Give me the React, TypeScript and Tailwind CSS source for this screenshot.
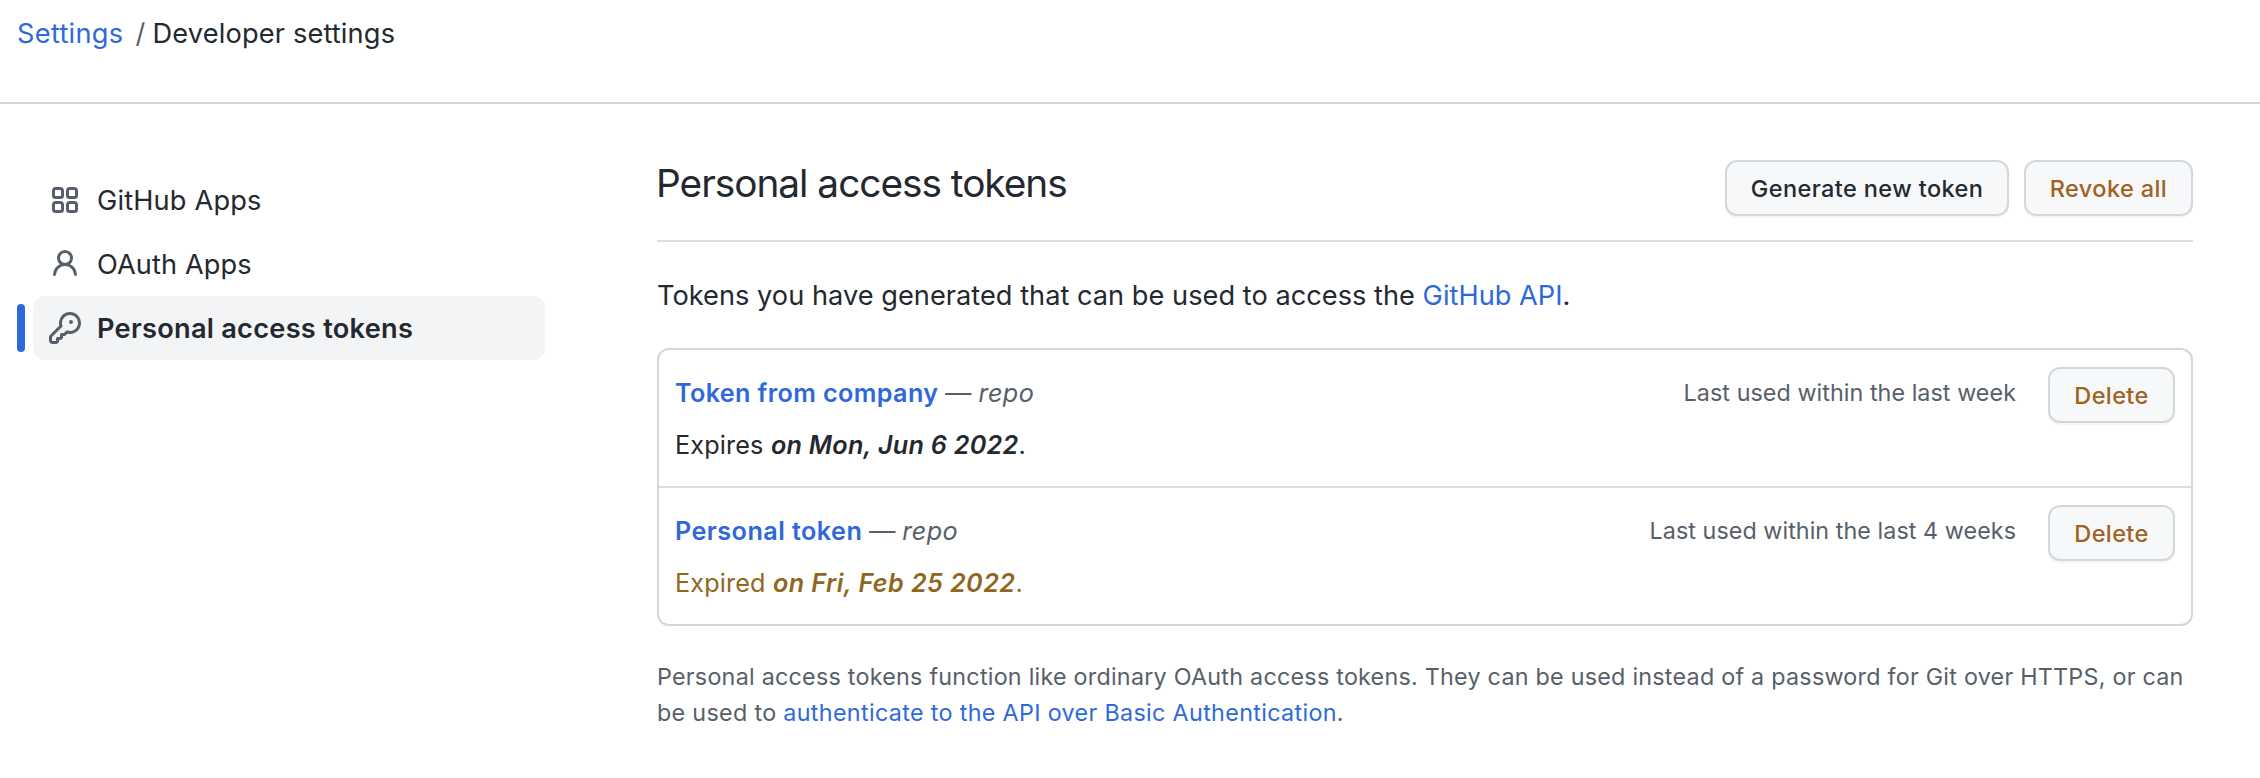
import type { ReactNode } from "react";

type IconProps = { path: string };

const APPS =
  "M1.5 3.25c0-.966.784-1.75 1.75-1.75h2.5c.966 0 1.75.784 1.75 1.75v2.5A1.75 1.75 0 0 1 5.75 7.5h-2.5A1.75 1.75 0 0 1 1.5 5.75v-2.5zM3.25 3a.25.25 0 0 0-.25.25v2.5c0 .138.112.25.25.25h2.5A.25.25 0 0 0 6 5.75v-2.5A.25.25 0 0 0 5.75 3h-2.5zM1.5 10.25c0-.966.784-1.75 1.75-1.75h2.5c.966 0 1.75.784 1.75 1.75v2.5a1.75 1.75 0 0 1-1.75 1.75h-2.5a1.75 1.75 0 0 1-1.75-1.75v-2.5zm1.75-.25a.25.25 0 0 0-.25.25v2.5c0 .138.112.25.25.25h2.5a.25.25 0 0 0 .25-.25v-2.5a.25.25 0 0 0-.25-.25h-2.5zM8.5 3.25c0-.966.784-1.75 1.75-1.75h2.5c.966 0 1.75.784 1.75 1.75v2.5a1.75 1.75 0 0 1-1.75 1.75h-2.5A1.75 1.75 0 0 1 8.5 5.75v-2.5zM10.25 3a.25.25 0 0 0-.25.25v2.5c0 .138.112.25.25.25h2.5a.25.25 0 0 0 .25-.25v-2.5a.25.25 0 0 0-.25-.25h-2.5zM8.5 10.25c0-.966.784-1.75 1.75-1.75h2.5c.966 0 1.75.784 1.75 1.75v2.5a1.75 1.75 0 0 1-1.75 1.75h-2.5a1.75 1.75 0 0 1-1.75-1.75v-2.5zm1.75-.25a.25.25 0 0 0-.25.25v2.5c0 .138.112.25.25.25h2.5a.25.25 0 0 0 .25-.25v-2.5a.25.25 0 0 0-.25-.25h-2.5z";
const PERSON =
  "M10.5 5a2.5 2.5 0 1 1-5 0 2.5 2.5 0 0 1 5 0zm.061 3.073a4 4 0 1 0-5.123 0 6.004 6.004 0 0 0-3.431 5.142.75.75 0 0 0 1.498.07 4.5 4.5 0 0 1 8.99 0 .75.75 0 1 0 1.498-.07 6.005 6.005 0 0 0-3.432-5.142z";
const KEY =
  "M6.5 5.5a4 4 0 1 1 2.731 3.795.75.75 0 0 0-.768.18L7.44 10.5H6.25a.75.75 0 0 0-.75.75v1.19l-.06.06H4.25a.75.75 0 0 0-.75.75v1.19l-.06.06H1.75a.25.25 0 0 1-.25-.25v-1.69l5.024-5.023a.75.75 0 0 0 .181-.768A3.995 3.995 0 0 1 6.5 5.5zm4-5.5a5.5 5.5 0 0 0-5.348 6.788L.22 11.72a.75.75 0 0 0-.22.53v2C0 15.216.784 16 1.75 16h2a.75.75 0 0 0 .53-.22l.5-.5a.75.75 0 0 0 .22-.53V14h.75a.75.75 0 0 0 .53-.22l.5-.5a.75.75 0 0 0 .22-.53V12h.75a.75.75 0 0 0 .53-.22l.932-.932A5.5 5.5 0 1 0 10.5 0zm.5 6a1 1 0 1 0 0-2 1 1 0 0 0 0 2z";

function Icon({ path }: IconProps) {
  return (
    <svg viewBox="0 0 16 16" className="size-8 shrink-0 fill-[#57606a]" aria-hidden="true">
      <path fillRule="evenodd" d={path} />
    </svg>
  );
}

type NavItemProps = { path: string; active?: boolean; className?: string; children: ReactNode };

function NavItem({ path, active = false, className = "", children }: NavItemProps) {
  return (
    <div className="flex items-center gap-2">
      <div className={`h-12 w-2 rounded-full ${active ? "bg-[#2f69d9]" : ""}`} />
      <a href="#" className={`flex h-16 w-[512px] items-center gap-4 rounded-xl px-4 text-[27.2px] ${className}`}>
        <Icon path={path} />
        <span className="pt-0.5">{children}</span>
      </a>
    </div>
  );
}

function Button({ className = "", children }: { className?: string; children: ReactNode }) {
  return (
    <button
      type="button"
      className={`flex h-14 shrink-0 items-center justify-center rounded-xl border-2 border-[#d4d7da] bg-[#f6f8fa] pt-px text-[23.5px] font-medium tracking-[0.4px] shadow-[0_2px_0_rgba(27,31,36,0.04)] ${className}`}
    >
      {children}
    </button>
  );
}

type TokenProps = {
  name: string;
  nameClass: string;
  used: string;
  verb: string;
  verbClass: string;
  date: string;
  dateClass: string;
  expiryClass?: string;
};

function TokenRow({ name, nameClass, used, verb, verbClass, date, dateClass, expiryClass = "" }: TokenProps) {
  return (
    <li className="flex items-start px-4 pb-3.5 text-[25.2px]">
      <div className="grow pt-[18px]">
        <div className="flex h-[52px] items-center whitespace-pre">
          <a href="#" className={`font-semibold text-[#2f69d9] ${nameClass}`}>{name}</a>
          <span className="ml-[6.5px] text-[#57606a]">
            <span className="inline-block w-[27px] origin-left scale-x-[1.05]">—</span>
            <i className="ml-[6.5px] tracking-[0.4px]">repo</i>
          </span>
        </div>
        <div className={`flex h-[52px] items-center ${expiryClass}`}>
          <span className={`tracking-[0.15px] ${verbClass}`}>{verb}</span>
          <span>
            <i className={`font-semibold ${dateClass}`}>{date}</i>.
          </span>
        </div>
      </div>
      <span className="mr-8 mt-[17.5px] flex h-[52px] items-center text-[23.3px] tracking-[0.06px] text-[#57606a]">{used}</span>
      <Button className="mt-[17px] w-[127px] text-[#a1611f]">Delete</Button>
    </li>
  );
}

export default function App() {
  return (
    <div className="h-[778px] w-[2260px] bg-white font-['Inter',sans-serif] text-[#24292f]">
      <header className="h-[104px] border-b-2 border-[#d0d7de] pl-[17px] pt-[13px] text-[27.2px] leading-[42px]">
        <nav className="flex">
          <a href="#" className="tracking-[0.3px] text-[#2f69d9]">Settings</a>
          <span className="ml-[12px] w-[17px] text-[#57606a]">/</span>
          <span className="tracking-[0.16px]">Developer settings</span>
        </nav>
      </header>

      <div className="flex">
        <aside className="w-[657px] pl-[17px] pt-16">
          <nav className="flex flex-col">
            <NavItem path={APPS} className="tracking-[0.16px]">GitHub Apps</NavItem>
            <NavItem path={PERSON} className="tracking-[0.1px]">OAuth Apps</NavItem>
            <NavItem path={KEY} active className="bg-[#f3f4f6] font-semibold tracking-[0.26px]">Personal access tokens</NavItem>
          </nav>
        </aside>

        <main className="w-[1536px] pt-[56px]">
          <div className="flex h-[82px] items-start gap-[15px] border-b-2 border-[#d8dee4]">
            <h1 className="-ml-px grow text-[38.8px] leading-[46px] tracking-[-1.02px]">Personal access tokens</h1>
            <Button className="w-[284px]">Generate new token</Button>
            <Button className="w-[169px] text-[#a1611f]">Revoke all</Button>
          </div>

          <p className="mt-[33px] text-[27.2px] leading-[42px] tracking-[0.02px]">
            Tokens you have generated that can be used to access the{" "}
            <a href="#" className="text-[#2f69d9]">GitHub API</a>.
          </p>

          <ul className="mt-[31px] rounded-xl border-2 border-[#d0d7de]">
            <TokenRow
              name="Token from company"
              nameClass="tracking-[0.36px]"
              used="Last used within the last week"
              verb="Expires"
              verbClass="w-[96px]"
              date="on Mon, Jun 6 2022"
              dateClass="tracking-[0.25px]"
            />
            <li className="h-0.5 bg-[#d8dee4]" role="separator" />
            <TokenRow
              name="Personal token"
              nameClass="tracking-[0.45px]"
              used="Last used within the last 4 weeks"
              verb="Expired"
              verbClass="w-[98px]"
              date="on Fri, Feb 25 2022"
              dateClass="tracking-[0.42px]"
              expiryClass="text-[#90671e]"
            />
          </ul>

          <p className="mt-[33px] whitespace-nowrap text-[23.3px] leading-[36px] tracking-[0.25px] text-[#57606a]">
            Personal access tokens function like ordinary OAuth access tokens. They can be used instead of a password for Git over HTTPS, or can
            <br />
            <span className="tracking-[0.32px]">be used to </span>
            <a href="#" className="tracking-[0.34px] text-[#2f69d9]">authenticate to the API over Basic Authentication</a>.
          </p>
        </main>
      </div>
    </div>
  );
}
